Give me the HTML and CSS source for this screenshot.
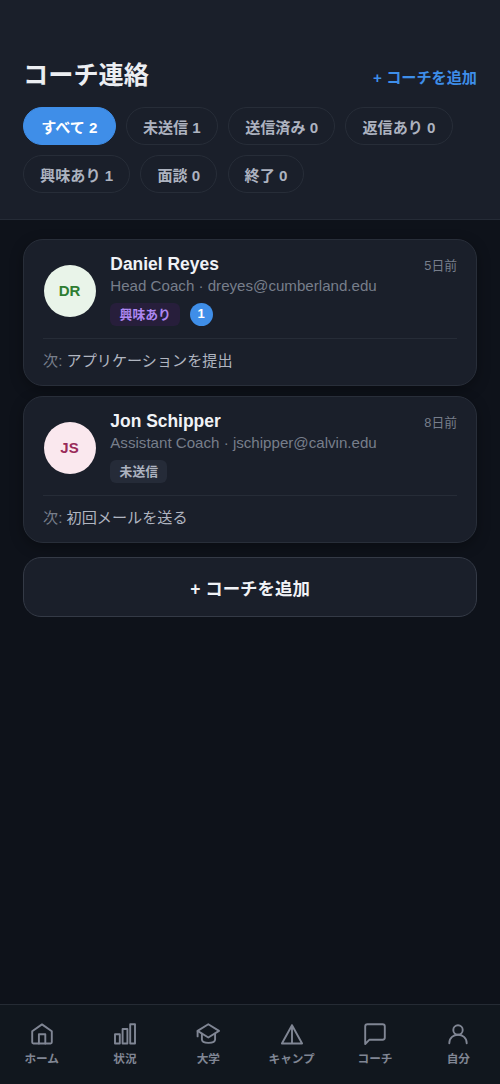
FILE: index.html
```html
<!DOCTYPE html>
<html lang="ja">
<head>
<meta charset="utf-8">
<meta name="viewport" content="width=device-width">
<title>コーチ連絡</title>
<link rel="stylesheet" href="styles.css">
</head>
<body>
<div class="app">
  <header class="header">
    <div class="title-row">
      <h1 class="title">コーチ連絡</h1>
      <a class="add-link">+ コーチを追加</a>
    </div>
    <div class="filters">
      <button class="pill active">すべて 2</button>
      <button class="pill">未送信 1</button>
      <button class="pill">送信済み 0</button>
      <button class="pill">返信あり 0</button>
      <button class="pill">興味あり 1</button>
      <button class="pill">面談 0</button>
      <button class="pill">終了 0</button>
    </div>
  </header>
  <main class="list">
    <article class="card">
      <div class="card-main">
        <div class="avatar green">DR</div>
        <div class="info">
          <div class="name-row"><h2 class="name">Daniel Reyes</h2><span class="time">5日前</span></div>
          <p class="role">Head Coach · dreyes@cumberland.edu</p>
          <div class="tags"><span class="tag interested">興味あり</span><span class="count">1</span></div>
        </div>
      </div>
      <p class="next"><span class="next-label">次:</span> アプリケーションを提出</p>
    </article>
    <article class="card">
      <div class="card-main">
        <div class="avatar pink">JS</div>
        <div class="info">
          <div class="name-row"><h2 class="name">Jon Schipper</h2><span class="time">8日前</span></div>
          <p class="role">Assistant Coach · jschipper@calvin.edu</p>
          <div class="tags"><span class="tag">未送信</span></div>
        </div>
      </div>
      <p class="next"><span class="next-label">次:</span> 初回メールを送る</p>
    </article>
    <button class="add-button">+ コーチを追加</button>
  </main>
  <nav class="tabs">
    <a class="tab"><svg class="icon" viewBox="0 0 28 28"><path d="M4.200 11.200 14 4.400l9.800 6.800v11.100a1.200 1.200 0 0 1-1.200 1.200H5.400a1.200 1.200 0 0 1-1.200-1.200z"/><path d="M10.900 23.500v-9.300h6.400v9.300"/></svg><span>ホーム</span></a>
    <a class="tab"><svg class="icon" viewBox="0 0 28 28"><path d="M4 14.200h4.800v9.300H4zM11.600 9h4.800v14.500h-4.800zM19.200 4.300H24v19.200h-4.800z"/></svg><span>状況</span></a>
    <a class="tab"><svg class="icon" viewBox="0 0 28 28"><path d="M14.300 4.300 25 10.900 14.300 17.500 3.600 10.900z"/><path d="M7.900 13.600v6c0 4.400 13.200 4.400 13.200 0v-6M3.600 10.900v5.500"/></svg><span>大学</span></a>
    <a class="tab"><svg class="icon" viewBox="0 0 28 28"><path d="M14 5.300 24.100 23.500H3.900zM14 5.300v18.200"/></svg><span>キャンプ</span></a>
    <a class="tab"><svg class="icon" viewBox="0 0 28 28"><path d="M23.800 17.500a2.200 2.200 0 0 1-2.200 2.200H8.500L4.200 24V6.500a2.200 2.200 0 0 1 2.200-2.200h15.200a2.200 2.200 0 0 1 2.200 2.200z"/></svg><span>コーチ</span></a>
    <a class="tab"><svg class="icon" viewBox="0 0 28 28"><circle cx="14" cy="10" r="4.700"/><path d="M5.300 23.200c0-11.300 17.400-11.300 17.400 0"/></svg><span>自分</span></a>
  </nav>
</div>
</body>
</html>
```
FILE: styles.css
```css
* { box-sizing: border-box; }
body {
  margin: 0;
  background: #0e121a;
  color: #f0f2f6;
  font-family: "Liberation Sans", "Noto Sans CJK JP", sans-serif;
}
h1, h2, p { margin: 0; }
button { font-family: inherit; }
.app { height: 1084px; display: flex; flex-direction: column; }
.header {
  height: 220px;
  padding: 57px 23px 0;
  background: #1a1f2a;
  border-bottom: 1px solid #252b36;
}
.title-row { height: 36px; display: flex; align-items: center; justify-content: space-between; }
.title { font-size: 25.200px; line-height: 36px; font-weight: 700; color: #eceef2; }
.add-link { color: #3e8ee9; font-size: 15.150px; font-weight: 700; line-height: 20px; padding-top: 5px; }
.filters { display: flex; flex-wrap: wrap; gap: 9.500px 10.200px; padding-top: 14px; }
.pill {
  height: 38.400px;
  padding: 0 16.100px 1px;
  border: 1px solid #272d38;
  border-radius: 20px;
  background: transparent;
  color: #adb3c0;
  font-size: 15.100px;
  font-weight: 700;
}
.pill.active { background: #3f8ee8; border-color: #3f8ee8; color: #fff; padding: 0 17.200px 1px; }
.list { flex: 1; padding: 18.500px 23px 0; display: flex; flex-direction: column; }
.card {
  height: 147.500px;
  margin-bottom: 9.500px;
  padding: 14px 19px 0;
  border: 1px solid #282e39;
  border-radius: 20px;
  background: #1a1f2a;
  box-shadow: 0 4px 14px rgba(0, 0, 0, .3);
}
.card-main {
  height: 85px;
  display: flex;
  gap: 14.800px;
  border-bottom: 1.500px solid #262c37;
}
.avatar {
  width: 52px;
  height: 52px;
  margin-top: 11px;
  margin-left: .5px;
  border-radius: 50%;
  display: flex;
  align-items: center;
  justify-content: center;
  font-size: 15px;
  font-weight: 700;
}
.green { background: #e9f4e9; color: #2e7d32; }
.pink { background: #fae8ee; color: #992b59; }
.info { flex: 1; }
.name-row { height: 22px; display: flex; align-items: center; justify-content: space-between; }
.name { font-size: 17.450px; line-height: 22px; padding-bottom: 2px; }
.time { font-size: 12.800px; line-height: 20px; color: #777e8b; padding-top: 2px; }
.role { font-size: 15.120px; line-height: 20px; color: #777e8b; }
.tags { display: flex; gap: 9.500px; margin-top: 7px; }
.tag {
  height: 23px;
  padding: 1px 9.300px 0;
  border-radius: 6px;
  background: #252b38;
  color: #adb3c0;
  font-size: 12.800px;
  font-weight: 700;
  line-height: 22px;
}
.interested { background: #271e3b; color: #ae87f2; }
.count {
  width: 23px;
  height: 23px;
  border-radius: 50%;
  background: #3f8ee8;
  color: #fff;
  font-size: 13px;
  font-weight: 700;
  line-height: 22px;
  text-align: center;
}
.next { margin-top: 11.500px; font-size: 15.130px; line-height: 21px; color: #b0b5c0; }
.next-label { color: #777e8b; }
.add-button {
  height: 60.500px;
  margin-top: 4.400px;
  border: 1px solid #343a46;
  border-radius: 18px;
  background: #1a1f2a;
  color: #f0f2f6;
  font-size: 17.450px;
  font-weight: 700;
  padding: 0;
}
.tabs {
  height: 80px;
  display: grid;
  grid-template-columns: repeat(6, 1fr);
  background: #11171e;
  border-top: 1px solid #252b34;
}
.tab {
  display: flex;
  flex-direction: column;
  align-items: center;
  padding-top: 15px;
  color: #808694;
  font-size: 11.650px;
  font-weight: 700;
  line-height: 18px;
}
.tab span { margin-top: 2px; }
.icon {
  width: 28px;
  height: 28px;
  fill: none;
  stroke: currentColor;
  stroke-width: 1.900;
  stroke-linecap: round;
  stroke-linejoin: round;
}
```
